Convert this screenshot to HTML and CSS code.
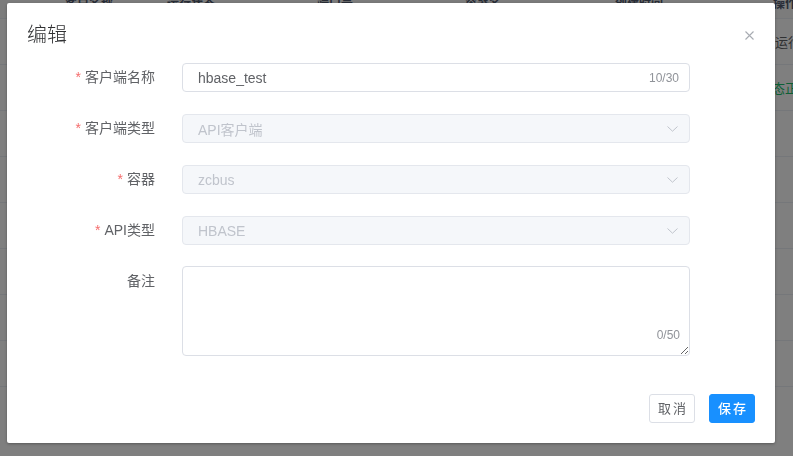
FILE: index.html
```html
<!DOCTYPE html>
<html lang="zh">
<head>
<meta charset="utf-8">
<title>编辑</title>
<link rel="stylesheet" href="styles.css">
</head>
<body>
<div class="bg-table">
  <div class="bg-row bg-head">
    <span></span><span>客户名称</span><span>运行状态</span><span>端口号</span><span>容器名</span><span>创建时间</span><span>操作</span>
  </div>
  <div class="bg-row">
    <span></span><span></span><span></span><span></span><span></span><span></span><span class="last">未运行</span>
  </div>
  <div class="bg-row">
    <span></span><span></span><span></span><span></span><span></span><span></span><span class="last green">状态正常</span>
  </div>
  <div class="bg-row"><span></span></div>
  <div class="bg-row"><span></span></div>
  <div class="bg-row"><span></span></div>
  <div class="bg-row"><span></span></div>
  <div class="bg-row"><span></span></div>
  <div class="bg-row"><span></span></div>
</div>

<div class="mask"></div>

<div class="dialog">
  <div class="dialog-header">
    <span class="dialog-title">编辑</span>
    <button class="close" aria-label="关闭">
      <svg width="9" height="9" viewBox="0 0 9 9"><path d="M0.5 0.5 L8.5 8.5 M8.5 0.5 L0.5 8.5" stroke="#a8abb2" stroke-width="1.1" fill="none"/></svg>
    </button>
  </div>
  <div class="dialog-body">
    <div class="form-item">
      <label class="label"><span class="req">*</span>客户端名称</label>
      <div class="input">
        <span class="value">hbase_test</span>
        <span class="count">10/30</span>
      </div>
    </div>
    <div class="form-item">
      <label class="label"><span class="req">*</span>客户端类型</label>
      <div class="input disabled">
        <span class="value">API客户端</span>
        <svg class="chev" width="11" height="6" viewBox="0 0 11 6"><path d="M0.5 0.5 L5.5 5.2 L10.5 0.5" stroke="#c0c4cc" stroke-width="1" fill="none"/></svg>
      </div>
    </div>
    <div class="form-item">
      <label class="label"><span class="req">*</span>容器</label>
      <div class="input disabled">
        <span class="value">zcbus</span>
        <svg class="chev" width="11" height="6" viewBox="0 0 11 6"><path d="M0.5 0.5 L5.5 5.2 L10.5 0.5" stroke="#c0c4cc" stroke-width="1" fill="none"/></svg>
      </div>
    </div>
    <div class="form-item">
      <label class="label"><span class="req">*</span>API类型</label>
      <div class="input disabled">
        <span class="value">HBASE</span>
        <svg class="chev" width="11" height="6" viewBox="0 0 11 6"><path d="M0.5 0.5 L5.5 5.2 L10.5 0.5" stroke="#c0c4cc" stroke-width="1" fill="none"/></svg>
      </div>
    </div>
    <div class="form-item">
      <label class="label">备注</label>
      <div class="textarea-wrap">
        <textarea class="textarea"></textarea>
        <span class="tcount">0/50</span>
      </div>
    </div>
  </div>
  <div class="dialog-footer">
    <button class="btn">取消</button>
    <button class="btn primary">保存</button>
  </div>
</div>
</body>
</html>
```

FILE: styles.css
```css
* { box-sizing: border-box; }
html, body {
  margin: 0;
  padding: 0;
  width: 793px;
  height: 456px;
  overflow: hidden;
  background: #fff;
  font-family: "Liberation Sans", "Noto Sans CJK SC", sans-serif;
}

/* background table */
.bg-table {
  margin-top: -22px;
  color: #606266;
  font-size: 13px;
}
.bg-row {
  display: grid;
  grid-template-columns: 65px 102px 150px 148px 150px 145px 1fr;
  height: 46px;
  align-items: center;
  border-bottom: 1px solid #ebeef5;
  white-space: nowrap;
  overflow: hidden;
}
.bg-head {
  height: 41px;
  padding-top: 8px;
  background: #f8f8f9;
  color: #515a6e;
  font-weight: bold;
  font-size: 12px;
}
.bg-head span:last-child { padding-left: 13px; }
.bg-row .last { padding-left: 2px; }
.bg-row .green { color: #19be6b; padding-left: 0; margin-left: -1px; }

.mask {
  position: fixed;
  inset: 0;
  background: rgba(0, 0, 0, 0.5);
}

/* dialog */
.dialog {
  position: absolute;
  top: 3px;
  left: 7px;
  width: 768px;
  height: 440px;
  background: #fff;
  border-radius: 2px;
  box-shadow: 0 1px 3px rgba(0, 0, 0, 0.3);
}
.dialog-header {
  display: flex;
  justify-content: space-between;
  align-items: center;
  padding: 20px 20px 10px;
  height: 54px;
}
.dialog-title {
  font-size: 20px;
  line-height: 24px;
  color: #303133;
  font-weight: 300;
}
.close {
  border: 0;
  background: none;
  padding: 0;
  margin: 0 1px 0 0;
  width: 9px;
  height: 9px;
  display: flex;
}
.dialog-body {
  padding: 6px 20px 0;
}
.form-item {
  display: flex;
  margin-bottom: 22px;
}
.label {
  width: 128px;
  margin-right: 27px;
  text-align: right;
  font-size: 14px;
  line-height: 29px;
  color: #606266;
}
.req {
  color: #f56c6c;
  margin-right: 4px;
}
.input {
  width: 508px;
  height: 29px;
  border: 1px solid #dcdfe6;
  border-radius: 4px;
  padding: 0 10px 0 15px;
  display: flex;
  align-items: center;
  justify-content: space-between;
  font-size: 14px;
  color: #606266;
  background: #fff;
}
.input.disabled {
  background: #f5f7fa;
  border-color: #e4e7ed;
  color: #c0c4cc;
}
.count {
  font-size: 12px;
  color: #909399;
}
.chev {
  margin-right: 1px;
  margin-top: 1px;
}
.textarea-wrap {
  position: relative;
  width: 508px;
  height: 90px;
}
.textarea {
  display: block;
  width: 508px;
  height: 90px;
  border: 1px solid #dcdfe6;
  border-radius: 4px;
  padding: 5px 15px;
  resize: vertical;
  font-family: inherit;
  font-size: 14px;
  color: #606266;
  background: #fff;
  margin: -1px 0 0;
}
.tcount {
  position: absolute;
  right: 10px;
  bottom: 15px;
  font-size: 12px;
  line-height: 14px;
  color: #909399;
}
.dialog-footer {
  display: flex;
  justify-content: flex-end;
  gap: 14px;
  padding: 15px 20px 20px;
}
.btn {
  height: 29px;
  padding: 0 6px 0 8px;
  border: 1px solid #dcdfe6;
  border-radius: 3px;
  background: #fff;
  color: #606266;
  font-family: inherit;
  font-size: 13px;
  letter-spacing: 2px;
  line-height: 27px;
}
.btn.primary {
  background: #1890ff;
  border-color: #1890ff;
  color: #fff;
  font-weight: 500;
}
```
